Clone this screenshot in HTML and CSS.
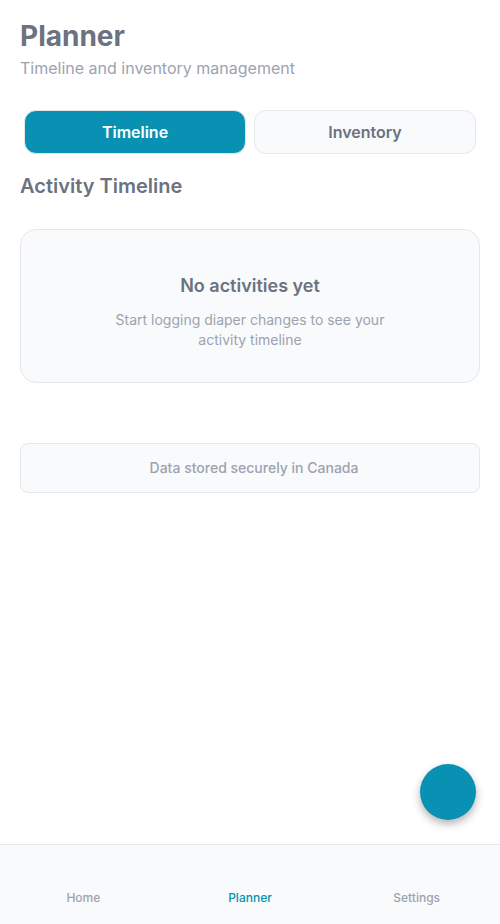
FILE: index.html
```html
<!DOCTYPE html>
<html lang="en">
<head>
<meta charset="utf-8">
<meta name="viewport" content="width=device-width, initial-scale=1">
<title>Planner</title>
<link rel="stylesheet" href="styles.css">
</head>
<body>
<div class="app">
  <main class="content">
    <header class="page-header">
      <h1 class="title">Planner</h1>
      <p class="subtitle">Timeline and inventory management</p>
    </header>
    <div class="tabs">
      <button class="tab tab-active" type="button">Timeline</button>
      <button class="tab" type="button">Inventory</button>
    </div>
    <h2 class="section-title">Activity Timeline</h2>
    <section class="empty-card">
      <h3 class="empty-title">No activities yet</h3>
      <p class="empty-text">Start logging diaper changes to see your activity timeline</p>
    </section>
    <div class="notice">
      <span class="notice-icon"></span>
      <p class="notice-text">Data stored securely in Canada</p>
    </div>
  </main>
  <button class="fab" type="button" aria-label="Add activity"></button>
  <nav class="nav">
    <a class="nav-link" href="#">Home</a>
    <a class="nav-link nav-active" href="#" aria-current="page">Planner</a>
    <a class="nav-link" href="#">Settings</a>
  </nav>
</div>
</body>
</html>
```
FILE: styles.css
```css
* {
  box-sizing: border-box;
}

body,
h1,
h2,
h3,
p {
  margin: 0;
}

body {
  background: #ffffff;
  color: #6b7280;
  font-family: Inter, "Liberation Sans", sans-serif;
}

.app {
  display: flex;
  flex-direction: column;
  min-height: 100vh;
}

.content {
  flex: 1;
  padding: 20px;
}

.title {
  font-size: 28px;
  line-height: 32px;
  font-weight: 700;
}

.subtitle {
  margin-top: 6px;
  color: #9ca3af;
  font-size: 16px;
  line-height: 20px;
}

.tabs {
  display: flex;
  gap: 8px;
  margin-top: 32px;
  padding: 0 4px;
}

.tab {
  flex: 1;
  height: 44px;
  border: 1px solid #e5e7eb;
  border-radius: 12px;
  background: #f9fafb;
  color: #6b7280;
  font: inherit;
  font-size: 16px;
  font-weight: 600;
}

.tab-active {
  background: #0891b2;
  color: #ffffff;
}

.section-title {
  margin-top: 20px;
  font-size: 20px;
  line-height: 24px;
  font-weight: 600;
}

.empty-card {
  display: flex;
  flex-direction: column;
  align-items: center;
  gap: 12px;
  margin-top: 31px;
  padding: 44px 32px 32px;
  border: 1px solid #e5e7eb;
  border-radius: 16px;
  background: #f9fafb;
  text-align: center;
}

.empty-title {
  font-size: 18px;
  line-height: 24px;
  font-weight: 600;
}

.empty-text {
  max-width: 280px;
  color: #9ca3af;
  font-size: 14px;
  line-height: 20px;
}

.notice {
  display: flex;
  justify-content: center;
  gap: 8px;
  margin-top: 60px;
  padding: 14px;
  border: 1px solid #e5e7eb;
  border-radius: 8px;
  background: #f9fafb;
}

.notice-text {
  color: #9ca3af;
  font-size: 14px;
  line-height: 20px;
  font-weight: 500;
}

.fab {
  position: fixed;
  right: 24px;
  bottom: 104px;
  width: 56px;
  height: 56px;
  border: 0;
  border-radius: 50%;
  background: #0891b2;
  box-shadow: 0 4px 8px rgba(0, 0, 0, 0.3);
}

.nav {
  position: sticky;
  bottom: 0;
  display: flex;
  padding: 45px 0 18px;
  border-top: 1px solid #e5e7eb;
  background: #f9fafb;
}

.nav-link {
  flex: 1;
  color: #9ca3af;
  font-size: 12px;
  line-height: 16px;
  font-weight: 500;
  text-align: center;
  text-decoration: none;
}

.nav-active {
  color: #0891b2;
}
```
